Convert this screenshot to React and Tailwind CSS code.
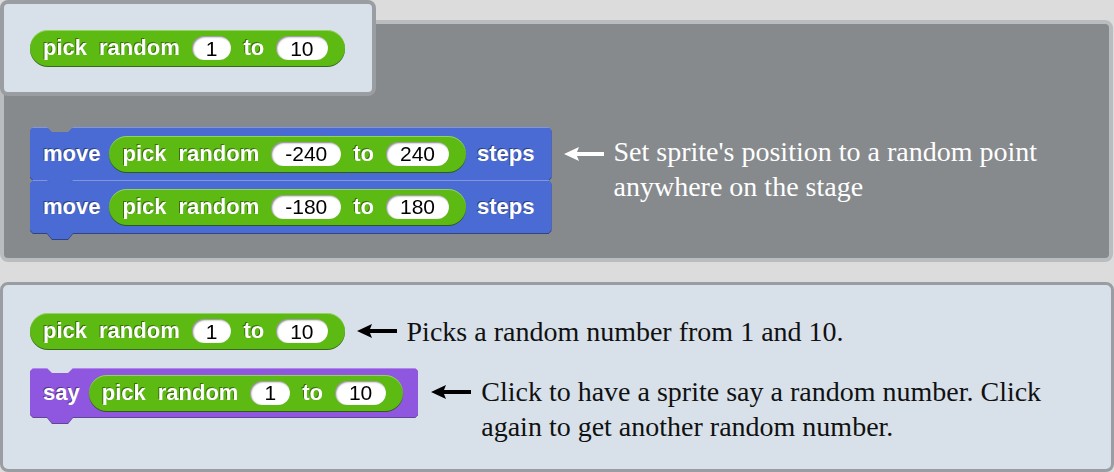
import React from 'react'

const label = "font-['Liberation_Sans',Arial,sans-serif] font-bold text-[22px] leading-none text-white [text-shadow:-1px_-1px_0_rgba(0,0,0,0.4)]"
const serif = "font-['Liberation_Serif','Times_New_Roman',serif] text-[28px] leading-[35px]"
const notched = "[clip-path:polygon(0_3px,3px_0,17px_0,22px_5px,38px_5px,43px_0,calc(100%_-_3px)_0,100%_3px,100%_calc(100%_-_9px),calc(100%_-_3px)_calc(100%_-_6px),43px_calc(100%_-_6px),38px_100%,22px_100%,17px_calc(100%_-_6px),3px_calc(100%_-_6px),0_calc(100%_-_9px))]"

const Slot = ({ children }) => (
  <span className="inline-flex h-[24px] items-center justify-center rounded-full bg-white px-[14px] font-['Liberation_Sans',Arial,sans-serif] text-[21px] font-normal leading-none text-black shadow-[inset_1px_1px_2px_rgba(0,0,0,0.5)]">
    {children}
  </span>
)

const PickRandom = ({ from, to }) => (
  <span className="inline-flex drop-shadow-[0_1px_0_rgba(40,90,10,0.9)]">
    <span className="inline-flex h-[36px] items-center gap-[12px] rounded-full bg-[#5cba12] pl-[13px] pr-[17px] shadow-[inset_0_1px_0_rgba(255,255,255,0.35)]">
      <span className={label}>pick</span>
      <span className={label}>random</span>
      <Slot>{from}</Slot>
      <span className={label}>to</span>
      <Slot>{to}</Slot>
    </span>
  </span>
)

const Command = ({ bg, edge, h, className = '', children }) => (
  <div className={`flex ${edge} ${className}`}>
    <div className={`flex items-start pb-[6px] ${notched} ${bg} shadow-[inset_0_1px_0_rgba(255,255,255,0.3)]`}>
      <div className={`flex items-center gap-[9px] pl-[13px] pr-[15px] ${h}`}>{children}</div>
    </div>
  </div>
)

const Arrow = ({ color }) => (
  <svg width="40" height="16" viewBox="0 0 40 16">
    <path d="M0 8 L15 1 L13 6 L40 6 L40 10 L13 10 L15 15 Z" fill={color} />
  </svg>
)

export default function App() {
  return (
    <div className="h-[472px] w-[1114px] overflow-hidden bg-[#dcdcdc]">
      <div className="relative pt-[20px]">
        <div className="flex h-[242px] w-[1113px] items-start rounded-[8px] border-4 border-[#b9bdc0] bg-[#868a8d] pl-[26px] pt-[103px]">
          <div className="flex flex-col">
            <Command bg="bg-[#4a6bd3]" edge="drop-shadow-[0_1px_0_rgba(30,50,120,0.8)]" h="h-[53px]">
              <span className={label}>move</span>
              <PickRandom from="-240" to="240" />
              <span className={`${label} ml-[2px] mr-[2px]`}>steps</span>
            </Command>
            <Command bg="bg-[#4a6bd3]" edge="drop-shadow-[0_1px_0_rgba(30,50,120,0.8)]" h="h-[53px]" className="-mt-[6px]">
              <span className={label}>move</span>
              <PickRandom from="-180" to="180" />
              <span className={`${label} ml-[2px] mr-[2px]`}>steps</span>
            </Command>
          </div>
          <div className="ml-[12px] mt-[7px] flex items-start">
            <div className="mt-[2px] flex h-[35px] items-center">
              <Arrow color="#ffffff" />
            </div>
            <p className={`ml-[10px] text-white ${serif}`}>
              Set sprite's position to a random point
              <br />
              anywhere on the stage
            </p>
          </div>
        </div>

        <div className="absolute left-0 top-0 h-[96px] w-[376px] rounded-[8px] border-4 border-[#9a9ea2] bg-[#d8e1ea] pl-[26px] pt-[26px]">
          <PickRandom from="1" to="10" />
        </div>
      </div>

      <div className="mt-[20px] h-[190px] rounded-[8px] border-[3px] border-[#9a9ea2] bg-[#d8e1ea] pl-[27px] pt-[28px]">
        <div className="flex items-center">
          <PickRandom from="1" to="10" />
          <div className="ml-[12px] flex items-center">
            <Arrow color="#000000" />
          </div>
          <p className={`ml-[10px] text-[#111] ${serif}`}>Picks a random number from 1 and 10.</p>
        </div>

        <div className="mt-[19px] flex items-start">
          <Command bg="bg-[#8f57e0]" edge="drop-shadow-[0_1px_0_rgba(70,30,130,0.8)]" h="h-[49px]">
            <span className={label}>say</span>
            <PickRandom from="1" to="10" />
          </Command>
          <div className="ml-[13px] mt-[6px] flex items-start">
            <div className="flex h-[35px] items-center">
              <Arrow color="#000000" />
            </div>
            <p className={`ml-[10px] text-[#111] ${serif}`}>
              Click to have a sprite say a random number. Click
              <br />
              again to get another random number.
            </p>
          </div>
        </div>
      </div>
    </div>
  )
}
